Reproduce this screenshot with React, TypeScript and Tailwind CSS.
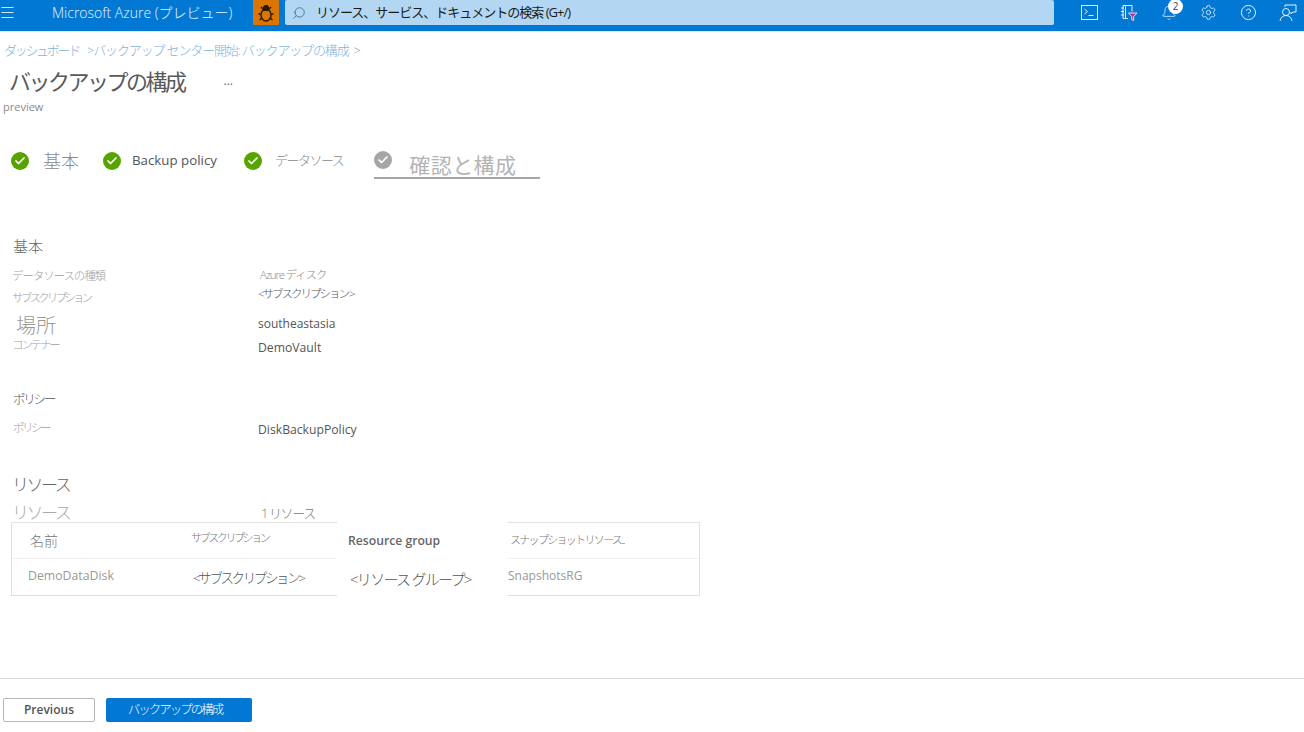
import React from "react";
import { Menu, Search, Settings, CircleHelp, Bell, Check } from "lucide-react";

const font = { fontFamily: '"Open Sans","Noto Sans CJK JP",sans-serif' };

function StepIcon({ grey }: { grey?: boolean }) {
  return (
    <span className={`flex h-[18px] w-[18px] shrink-0 items-center justify-center rounded-full ${grey ? "bg-[#a6a6a6]" : "bg-[#57a300]"}`}>
      <Check size={12} strokeWidth={3.5} className="text-white" />
    </span>
  );
}

function Header() {
  return (
    <header className="flex h-[32px] items-start border-b border-[#d8e9f6] bg-[#0078d4] text-white">
      <div className="flex h-[25px] items-center">
        <Menu size={17} strokeWidth={1.5} className="ml-[-1px] w-[17px] shrink-0 text-[#cfe4f6]" />
        <span className="ml-[36px] w-[201px] shrink-0 whitespace-nowrap text-[14px] font-light text-[#eaf4fc]">Microsoft Azure (プレビュー)</span>
        <span className="flex h-[25px] w-[26px] shrink-0 items-center justify-center rounded-[1px] bg-[#db7500]">
          <svg width="16" height="18" viewBox="0 0 16 18" fill="none" stroke="#2b1a00" strokeWidth="1.4">
            <ellipse cx="8" cy="11" rx="5" ry="6" />
            <circle cx="8" cy="4" r="2.4" fill="#2b1a00" />
            <path d="M3 3l2.5 2.5M13 3l-2.5 2.5M0.5 10h2.5M15.5 10H13M1.5 16l2.5-2M14.5 16L12 14" />
          </svg>
        </span>
        <div className="ml-[6px] flex h-[25px] w-[769px] shrink-0 items-center rounded-[2px] bg-[#b3d7f2] text-black">
          <Search size={14} strokeWidth={1.5} className="ml-[7px] shrink-0 -scale-x-100 text-[#2f6fa8]" />
          <span className="ml-[10px] whitespace-nowrap text-[13px] tracking-[-1px] text-[#1a1a1a]">リソース、サービス、ドキュメントの検索 (G+/)</span>
        </div>
        <div className="ml-[15px] flex shrink-0 items-center">
          <span className="flex w-[40px] justify-center">
            <svg width="17" height="15" viewBox="0 0 17 15" fill="none" stroke="#e6f2fb" strokeWidth="1">
              <rect x="0.5" y="0.5" width="16" height="14" />
              <path d="M3.5 4l3 2.5-3 2.5M7.5 10.5h5" />
            </svg>
          </span>
          <span className="flex w-[40px] justify-center">
            <svg width="18" height="18" viewBox="0 0 18 18" fill="none" stroke="#e6f2fb" strokeWidth="1">
              <path d="M3 1.5h9v6M3 1.5v13h5M5.5 1.5v13M1 4h3M1 7.5h3M1 11h3" />
              <path d="M8.5 9h8.5l-3.3 3.6v4l-2-1v-3z" fill="#b4359a" stroke="#f0d8ec" />
            </svg>
          </span>
          <span className="relative flex w-[40px] justify-center">
            <Bell size={16} strokeWidth={1.2} className="text-[#e6f2fb]" />
            <span className="absolute left-[19px] top-[-6px] flex h-[15px] w-[15px] items-center justify-center rounded-full bg-white text-[10px] text-[#444]">2</span>
          </span>
          <span className="flex w-[39px] justify-center">
            <Settings size={17} strokeWidth={1.2} className="text-[#e6f2fb]" />
          </span>
          <span className="flex w-[40px] justify-center">
            <CircleHelp size={17} strokeWidth={1.4} className="text-[#e6f2fb]" />
          </span>
          <span className="flex w-[40px] justify-center">
            <svg width="18" height="18" viewBox="0 0 18 18" fill="none" stroke="#e6f2fb" strokeWidth="1">
              <circle cx="7" cy="8" r="3.5" />
              <path d="M1 17c.5-3.5 3-5.5 6-5.5s5.5 2 6 5.5" />
              <path d="M6 3V1h11v7h-3l-2 2V8" />
            </svg>
          </span>
        </div>
      </div>
    </header>
  );
}

function Row({ className, label, value }: { className: string; label: React.ReactNode; value: React.ReactNode }) {
  return (
    <div className={`grid grid-cols-[246px_1fr] items-center ${className}`}>
      {label}
      {value}
    </div>
  );
}

export default function App() {
  return (
    <div style={font} className="flex h-[732px] w-[1304px] flex-col overflow-hidden bg-white">
      <Header />
      <nav className="ml-[4px] mt-[9px] flex h-[20px] items-center whitespace-nowrap text-[13px] font-light text-[#7fb2dc]">
        <span className="w-[83px] tracking-[-2.3px]">ダッシュボード</span>
        <span className="tracking-[-1.15px]">&gt;バックアップ センター開始: バックアップの構成</span>
        <span className="ml-[5px] text-[#9a9a9a]">&gt;</span>
      </nav>
      <div className="ml-[9px] mt-[5px] flex h-[30px] items-center">
        <h1 className="whitespace-nowrap text-[22px] font-normal tracking-[-2.5px] text-[#5a5a5a]">バックアップの構成</h1>
        <span className="ml-[39px] text-[12px] text-[#666]">...</span>
      </div>
      <p className="ml-[3px] mt-[3px] h-[16px] text-[11px] leading-[16px] text-[#8a8a8a]">preview</p>

      <div className="ml-[11px] mt-[36px] flex h-[36px] items-start">
        <div className="flex h-[20px] items-center">
          <StepIcon />
          <span className="ml-[14px] text-[18px] font-light text-[#8a8a8a]">基本</span>
        </div>
        <div className="ml-[24px] flex h-[20px] items-center">
          <StepIcon />
          <span className="ml-[11px] text-[13.3px] text-[#555]">Backup policy</span>
        </div>
        <div className="ml-[27px] flex h-[20px] items-center">
          <StepIcon />
          <span className="ml-[13px] text-[13px] font-light tracking-[-1.5px] text-[#888]">データソース</span>
        </div>
        <div className="ml-[31px] flex h-[28px] w-[166px] items-start border-b-2 border-[#a6a6a6]">
          <StepIcon grey />
          <span className="ml-[17px] mt-[1px] whitespace-nowrap text-[21px] leading-[26px] tracking-[0.4px] text-[#b4b4b4]">確認と構成</span>
        </div>
      </div>

      <div className="mt-[49px] flex flex-col pl-[12px]">
        <h2 className="ml-[1px] h-[20px] text-[15px] font-light leading-[20px] text-[#666]">基本</h2>
        <Row
          className="mt-[10px] h-[20px] text-[11.5px] text-[#a0a0a0]"
          label={<span className="font-light leading-[14px] tracking-[-1.1px]">データソースの種類</span>}
          value={<span className="mb-[2px] ml-[2px] font-light leading-[14px] tracking-[-1.2px] text-[#8a8a8a]">Azure ディスク</span>}
        />
        <Row
          className="mt-[1px] h-[24px] text-[11.5px]"
          label={<span className="mb-[2px] font-light leading-[14px] tracking-[-2.8px] text-[#a0a0a0]">サブスクリプション</span>}
          value={<span className="mb-[10px] font-light leading-[14px] tracking-[-2px] text-[#555]">&lt;サブスクリプション &gt;</span>}
        />
        <Row
          className="mt-[3px] h-[24px]"
          label={<span className="ml-[4px] text-[20px] font-light leading-[24px] text-[#999]">場所</span>}
          value={<span className="mb-[4px] text-[12px] leading-[16px] text-[#555]">southeastasia</span>}
        />
        <Row
          className="h-[24px]"
          label={<span className="mb-[10px] text-[11.5px] font-light leading-[14px] tracking-[-2.2px] text-[#a0a0a0]">コンテナー</span>}
          value={<span className="mb-[4px] text-[12.2px] leading-[16px] text-[#555]">DemoVault</span>}
        />
        <h2 className="ml-[1px] mt-[28px] h-[20px] text-[12.5px] font-light leading-[20px] tracking-[-2.2px] text-[#555]">ポリシー</h2>
        <Row
          className="mt-[9px] h-[24px]"
          label={<span className="mb-[6px] ml-[1px] text-[11.5px] font-light tracking-[-2.5px] text-[#a0a0a0]">ポリシー</span>}
          value={<span className="mb-[2px] text-[12.2px] text-[#555]">DiskBackupPolicy</span>}
        />
        <h2 className="mt-[29px] h-[26px] text-[17px] font-light leading-[26px] tracking-[-2.5px] text-[#666]">リソース</h2>
        <Row
          className="mt-[5px] h-[20px]"
          label={<span className="text-[17px] font-light leading-[20px] tracking-[-2.5px] text-[#aaa]">リソース</span>}
          value={<span className="ml-[3px] text-[13px] font-light leading-[20px] tracking-[-1.4px] text-[#777]">1 リソース</span>}
        />
      </div>

      <div className="ml-[11px] mt-[-1px] grid w-[689px] grid-cols-[325px_171px_191px] border border-[#e0e0e0]">
        <div className="flex h-[36px] items-center border-b border-[#f0f0f0]">
          <span className="ml-[18px] w-[161px] shrink-0 text-[14px] font-light text-[#777]">名前</span>
          <span className="mb-[4px] whitespace-nowrap text-[11px] font-light tracking-[-2.4px] text-[#777]">サブスクリプション</span>
        </div>
        <div className="z-10 -mb-px -mt-px flex items-center bg-white pl-[11px] text-[12.2px] font-semibold text-[#666]">Resource group</div>
        <div className="flex h-[36px] items-center whitespace-nowrap border-b border-[#f0f0f0] pl-[2px] text-[11px] font-light tracking-[-1.7px] text-[#777]">スナップショットリソース...</div>
        <div className="flex h-[36px] items-center">
          <span className="mb-[1px] ml-[16px] w-[165px] shrink-0 text-[12.3px] text-[#999]">DemoDataDisk</span>
          <span className="mt-[2px] whitespace-nowrap text-[13.5px] font-light tracking-[-2.4px] text-[#555]">&lt;サブスクリプション&gt;</span>
        </div>
        <div className="z-10 -mb-px flex items-center whitespace-nowrap bg-white pl-[13px] pt-[4px] text-[15px] font-light tracking-[-1.7px] text-[#555]">&lt;リソース グループ&gt;</div>
        <div className="flex h-[36px] items-center pb-[2px] text-[12px] text-[#999]">SnapshotsRG</div>
      </div>

      <footer className="mt-auto flex h-[54px] items-start border-t border-[#d9d9d9] pl-[3px] pt-[19px]">
        <button className="h-[24px] w-[92px] rounded-[2px] border border-[#b5b5b5] bg-white text-[12px] font-semibold text-[#555]">Previous</button>
        <button className="ml-[11px] h-[24px] w-[146px] rounded-[2px] bg-[#0078d4] pr-[8px] text-[12.5px] font-light tracking-[-2px] text-white">バックアップの構成</button>
      </footer>
    </div>
  );
}
